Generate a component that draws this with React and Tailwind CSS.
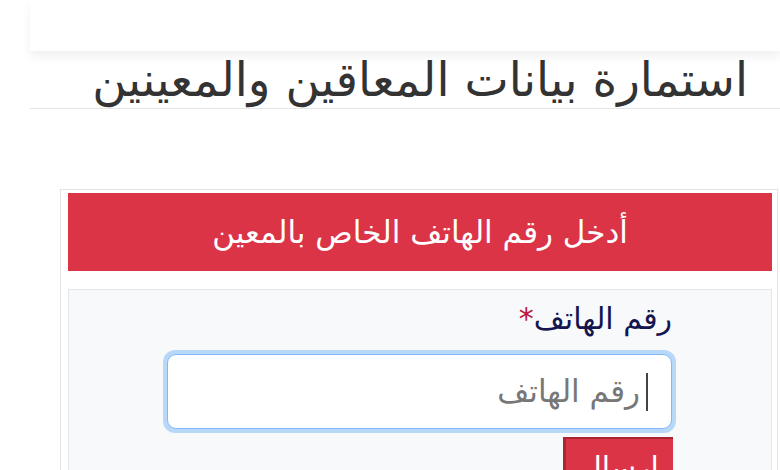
import React from "react";

const App = () => {
  return (
    <div
      dir="rtl"
      className="w-[780px] h-[470px] overflow-hidden bg-white"
      style={{ fontFamily: '"DejaVu Sans", "Noto Sans", sans-serif' }}
    >
      <div className="ml-[30px]">
        <div className="h-[51px] bg-white shadow-[0_6px_10px_rgba(0,0,0,0.06)]" />
        <div className="border-b border-[#e6e6e6] h-[58px] flex items-center pr-[32px]">
          <h1 className="text-[47px] leading-none text-[#333] font-normal">
            استمارة بيانات المعاقين والمعينين
          </h1>
        </div>
      </div>

      <div className="ml-[60px] mr-[2px] mt-[80px] border border-[#e3e3e3] pl-[7px] pr-[5px] pt-[3px]">
        <div className="h-[78px] bg-[#db3447] flex items-center justify-center">
          <span className="text-white text-[31px] leading-none">
            أدخل رقم الهاتف الخاص بالمعين
          </span>
        </div>
        <div className="mt-[18px] bg-[#f8f9fa] border border-[#e4e6e8] pr-[95px] pt-[8px] pb-[20px]">
          <label className="block pr-[4px] text-[#141450] text-[30px] leading-[42px]">
            رقم الهاتف<span className="text-[#c0143c]">*</span>
          </label>
          <div className="mt-[10px] w-[513px] h-[83px] rounded-[12px] bg-[#b8d8f8] p-[4px]">
            <div className="h-full w-full rounded-[9px] bg-white border border-[#86b7fe] flex items-center pr-[23px]">
              <span className="w-[2px] h-[38px] bg-[#444] ml-[6px]" />
              <span className="text-[#777] text-[31px] leading-none">رقم الهاتف</span>
            </div>
          </div>
          <button className="mt-[4px] mr-[3px] w-[110px] h-[50px] bg-[#db3447] text-white text-[30px] leading-none border-l-[3px] border-t-[2px] border-[#a82534] flex items-start justify-center pt-[14px] overflow-hidden">
            إرسال
          </button>
        </div>
      </div>
    </div>
  );
};

export default App;
